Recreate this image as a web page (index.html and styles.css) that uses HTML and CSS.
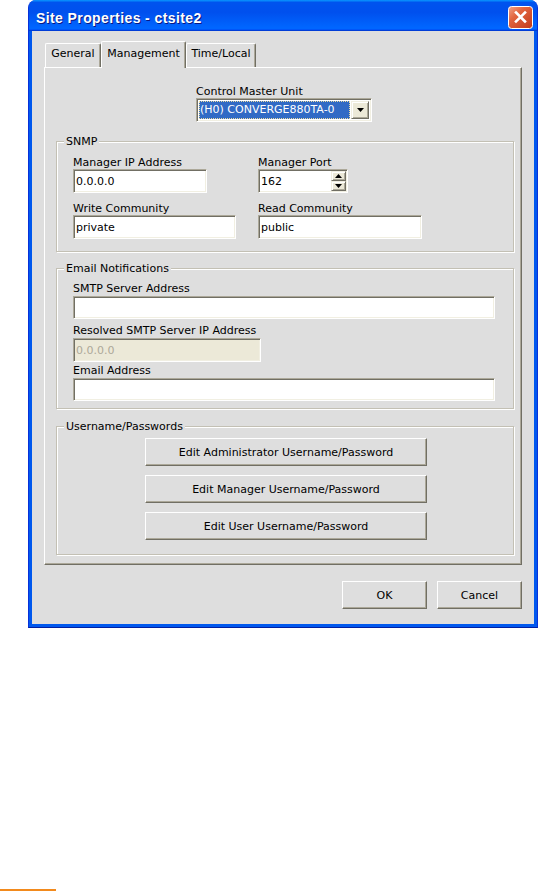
FILE: index.html
```html
<!DOCTYPE html>
<html>
<head>
<meta charset="utf-8">
<link rel="stylesheet" href="styles.css">
</head>
<body>
<div class="window">
  <div class="titlebar">
    <span class="title">Site Properties - ctsite2</span>
    <button class="close" aria-label="Close">
      <svg width="25" height="23" viewBox="0 0 25 23">
        <defs>
          <linearGradient id="cg" x1="0" y1="0" x2="1" y2="1">
            <stop offset="0" stop-color="#f0a48a"/>
            <stop offset="0.35" stop-color="#e2653f"/>
            <stop offset="1" stop-color="#c1391b"/>
          </linearGradient>
        </defs>
        <rect x="0.5" y="0.5" width="24" height="22" rx="3" fill="url(#cg)" stroke="#ffffff"/>
        <path d="M8 6.5 L17 15.5 M17 6.5 L8 15.5" stroke="#ffffff" stroke-width="2.6" stroke-linecap="square"/>
      </svg>
    </button>
  </div>
  <div class="client">
    <div class="tabs">
      <div class="tab tab-general">General</div>
      <div class="tab tab-active">Management</div>
      <div class="tab tab-time">Time/Local</div>
    </div>
    <div class="panel">
      <div class="cmu">
        <div class="lbl">Control Master Unit</div>
        <div class="combo">
          <span class="combo-value">(H0) CONVERGE880TA-0</span>
          <span class="combo-btn">
            <svg width="7" height="4" viewBox="0 0 7 4"><path d="M0 0 H7 L3.5 4 Z" fill="#000"/></svg>
          </span>
        </div>
      </div>

      <div class="group group-snmp">
        <div class="group-title">SNMP</div>
        <div class="snmp-grid">
          <div class="field">
            <div class="lbl">Manager IP Address</div>
            <input class="edit w-ip" type="text" value="0.0.0.0">
          </div>
          <div class="field">
            <div class="lbl">Manager Port</div>
            <div class="spin">
              <input class="spin-input" type="text" value="162">
              <div class="spin-btns">
                <span class="spin-btn"><svg width="7" height="4" viewBox="0 0 7 4"><path d="M0 4 H7 L3.5 0 Z" fill="#000"/></svg></span>
                <span class="spin-btn"><svg width="7" height="4" viewBox="0 0 7 4"><path d="M0 0 H7 L3.5 4 Z" fill="#000"/></svg></span>
              </div>
            </div>
          </div>
          <div class="field">
            <div class="lbl">Write Community</div>
            <input class="edit w-write" type="text" value="private">
          </div>
          <div class="field">
            <div class="lbl">Read Community</div>
            <input class="edit w-read" type="text" value="public">
          </div>
        </div>
      </div>

      <div class="group group-email">
        <div class="group-title">Email Notifications</div>
        <div class="email-body">
          <div class="field">
            <div class="lbl">SMTP Server Address</div>
            <input class="edit w-wide" type="text" value="">
          </div>
          <div class="field f-resolved">
            <div class="lbl">Resolved SMTP Server IP Address</div>
            <input class="edit w-resolved disabled" type="text" value="0.0.0.0" disabled>
          </div>
          <div class="field f-email">
            <div class="lbl">Email Address</div>
            <input class="edit w-wide" type="text" value="">
          </div>
        </div>
      </div>

      <div class="group group-users">
        <div class="group-title">Username/Passwords</div>
        <div class="users-body">
          <button class="btn btn-wide">Edit Administrator Username/Password</button>
          <button class="btn btn-wide">Edit Manager Username/Password</button>
          <button class="btn btn-wide">Edit User Username/Password</button>
        </div>
      </div>
    </div>
    <div class="actions">
      <button class="btn btn-dlg">OK</button>
      <button class="btn btn-dlg">Cancel</button>
    </div>
  </div>
</div>
<div class="orange-bar"></div>
</body>
</html>
```
FILE: styles.css
```css
html, body {
  margin: 0;
  padding: 0;
  background: #ffffff;
}
body {
  font-family: "DejaVu Sans", "Liberation Sans", Arial, sans-serif;
  font-size: 11px;
  color: #000;
}

.window {
  margin-left: 28px;
  width: 510px;
  height: 628px;
  box-sizing: border-box;
  display: flex;
  flex-direction: column;
  background: #0058ee;
  border-radius: 8px 8px 0 0;
  border-left: 1px solid #0831d9;
  border-right: 1px solid #0831d9;
  border-bottom: 1px solid #001ea0;
}

.titlebar {
  flex: none;
  height: 31px;
  box-sizing: border-box;
  display: flex;
  align-items: flex-start;
  justify-content: space-between;
  padding: 6px 4px 0 7px;
  border-radius: 7px 7px 0 0;
  background: linear-gradient(to bottom, #0997ff 0%, #0053ee 8%, #0050ee 40%, #0066ff 88%, #0066ff 93%, #005bff 95%, #003dd7 96%, #003dd7 100%);
}

.title {
  margin-top: 4px;
  color: #ffffff;
  font-family: "Liberation Sans", Arial, sans-serif;
  font-weight: bold;
  font-size: 14px;
  line-height: 16px;
  letter-spacing: 0.4px;
  text-shadow: 1px 1px 0 #0a1883;
}

.close {
  width: 25px;
  height: 23px;
  padding: 0;
  border: 0;
  background: transparent;
  display: block;
}
.close svg { display: block; }

.client {
  flex: 1;
  margin: 0 3px 3px;
  background: #dedede;
  padding: 10px 12px 15px 12px;
  display: flex;
  flex-direction: column;
}

/* tabs */
.tabs {
  display: flex;
  align-items: flex-end;
  height: 26px;
  padding-left: 1px;
}
.tab {
  height: 24px;
  box-sizing: border-box;
  padding-top: 3px;
  text-align: center;
  line-height: 13px;
  border-top: 1px solid #ffffff;
  border-left: 1px solid #ffffff;
  border-right: 1px solid #716f64;
  border-radius: 2px 2px 0 0;
  box-shadow: inset -1px 0 0 #aca899;
  background: #dedede;
}
.tab-general { width: 56px; }
.tab-time { width: 70px; }
.tab-active {
  width: 85px;
  height: 27px;
  padding-top: 5px;
  margin-bottom: -1px;
  position: relative;
  z-index: 1;
}

.panel {
  height: 498px;
  box-sizing: border-box;
  border: 1px solid;
  border-color: #ffffff #716f64 #716f64 #ffffff;
  box-shadow: inset -1px -1px 0 #aca899;
  padding: 0 8px 0 11px;
  background: #dedede;
}

.lbl {
  line-height: 13px;
  white-space: nowrap;
}

/* combo */
.cmu {
  margin: 17px 0 0 140px;
}
.combo {
  width: 176px;
  height: 24px;
  box-sizing: border-box;
  display: flex;
  align-items: stretch;
  padding: 1px 2px 1px 1px;
  background: #ffffff;
  border: 1px solid;
  border-color: #aca899 #ffffff #ffffff #aca899;
  box-shadow: inset 1px 1px 0 #716f64, inset -1px -1px 0 #f1efe2;
}
.combo-value {
  flex: 1;
  margin: 1px 1px 1px 1px;
  background: #316ac5;
  color: #ffffff;
  line-height: 18px;
  padding-left: 1px;
  outline: 1px dotted #e8d9a0;
  outline-offset: -1px;
  white-space: nowrap;
  overflow: hidden;
}
.combo-btn {
  width: 18px;
  margin: 1px 0;
  box-sizing: border-box;
  display: flex;
  align-items: center;
  justify-content: center;
  background: #ece9d8;
  border: 1px solid;
  border-color: #f1efe2 #716f64 #716f64 #f1efe2;
  box-shadow: inset 1px 1px 0 #ffffff, inset -1px -1px 0 #aca899;
}

/* group boxes */
.group {
  width: 458px;
  box-sizing: border-box;
  border: 1px solid #c3c0b4;
  box-shadow: inset 1px 1px 0 #ffffff, 1px 1px 0 #ffffff;
}
.group-title {
  display: table;
  margin: -7px 0 0 7px;
  padding: 0 2px;
  line-height: 13px;
  background: #dedede;
}
.group-snmp { margin-top: 19px; }
.group-email { margin-top: 16px; }
.group-users { margin-top: 17px; }

.snmp-grid {
  display: grid;
  grid-template-columns: 185px auto;
  row-gap: 9px;
  padding: 8px 0 12px 16px;
}

.edit {
  display: block;
  height: 24px;
  box-sizing: border-box;
  margin: 0;
  padding: 0 2px;
  font-family: "DejaVu Sans", "Liberation Sans", Arial, sans-serif;
  font-size: 11px;
  color: #000;
  background: #ffffff;
  border: 1px solid;
  border-color: #aca899 #ffffff #ffffff #aca899;
  box-shadow: inset 1px 1px 0 #716f64, inset -1px -1px 0 #f1efe2;
  outline: none;
}
.w-ip { width: 134px; }
.w-write { width: 163px; }
.w-read { width: 164px; }
.w-wide { width: 422px; height: 23px; }
.w-resolved { width: 188px; }
.edit.disabled {
  background: #ece9d8;
  color: #aca899;
}

.spin {
  width: 90px;
  height: 24px;
  box-sizing: border-box;
  display: flex;
  padding: 1px;
  background: #ffffff;
  border: 1px solid;
  border-color: #aca899 #ffffff #ffffff #aca899;
  box-shadow: inset 1px 1px 0 #716f64, inset -1px -1px 0 #f1efe2;
}
.spin-input {
  flex: 1;
  min-width: 0;
  border: 0;
  margin: 0;
  padding: 0 1px;
  font-family: "DejaVu Sans", "Liberation Sans", Arial, sans-serif;
  font-size: 11px;
  color: #000;
  background: transparent;
  outline: none;
}
.spin-btns {
  width: 15px;
  display: flex;
  flex-direction: column;
}
.spin-btn {
  flex: 1;
  display: flex;
  align-items: center;
  justify-content: center;
  box-sizing: border-box;
  background: #ece9d8;
  border: 1px solid;
  border-color: #f1efe2 #716f64 #716f64 #f1efe2;
  box-shadow: inset 1px 1px 0 #ffffff, inset -1px -1px 0 #aca899;
}
.spin-btn svg { display: block; }

.email-body {
  padding: 7px 0 7px 16px;
}
.email-body .lbl { margin-bottom: 1px; }
.f-resolved { margin-top: 5px; }
.f-email { margin-top: 2px; }

.users-body {
  display: flex;
  flex-direction: column;
  gap: 9px;
  padding: 5px 0 14px 88px;
}

/* buttons */
.btn {
  display: block;
  box-sizing: border-box;
  margin: 0;
  padding: 0;
  font-family: "DejaVu Sans", "Liberation Sans", Arial, sans-serif;
  font-size: 11px;
  color: #000;
  background: #dedede;
  border: 1px solid;
  border-color: #ffffff #716f64 #716f64 #ffffff;
  box-shadow: inset -1px -1px 0 #aca899;
  text-align: center;
}
.btn-wide { width: 282px; height: 28px; }

.actions {
  margin-top: 16px;
  display: flex;
  justify-content: flex-end;
  gap: 10px;
}
.btn-dlg { width: 85px; height: 28px; }

.orange-bar {
  margin-top: 261px;
  width: 56px;
  height: 2px;
  background: #f28a1d;
}
```
